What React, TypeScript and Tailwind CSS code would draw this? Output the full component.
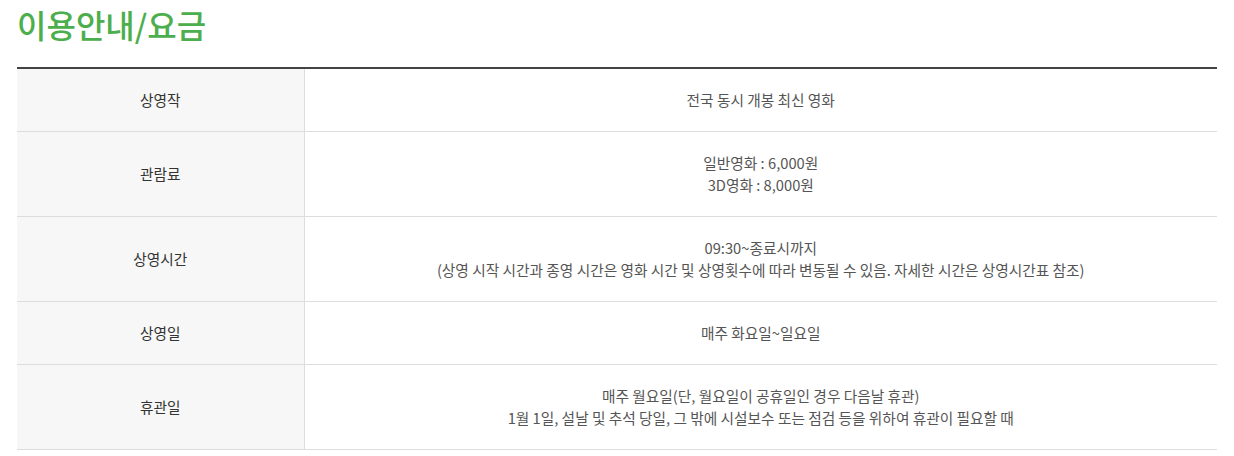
export default function App() {
  const rows: { label: string; lines: string[] }[] = [
    { label: "상영작", lines: ["전국 동시 개봉 최신 영화"] },
    { label: "관람료", lines: ["일반영화 : 6,000원", "3D영화 : 8,000원"] },
    {
      label: "상영시간",
      lines: [
        "09:30~종료시까지",
        "(상영 시작 시간과 종영 시간은 영화 시간 및 상영횟수에 따라 변동될 수 있음. 자세한 시간은 상영시간표 참조)",
      ],
    },
    { label: "상영일", lines: ["매주 화요일~일요일"] },
    {
      label: "휴관일",
      lines: [
        "매주 월요일(단, 월요일이 공휴일인 경우 다음날 휴관)",
        "1월 1일, 설날 및 추석 당일, 그 밖에 시설보수 또는 점검 등을 위하여 휴관이 필요할 때",
      ],
    },
  ];

  return (
    <div
      className="w-[1234px] bg-white pl-[17px] pr-[17px]"
      style={{ fontFamily: '"Noto Sans CJK KR", "Noto Sans", sans-serif' }}
    >
      {/* Title */}
      <h2 className="pt-[4px] text-[32px] font-medium leading-[40px] text-[#4cae4c]">
        이용안내/요금
      </h2>

      {/* Table */}
      <table className="mt-[23px] w-[1200px] border-collapse border-t-2 border-[#444]">
        <tbody>
          {rows.map((row) => (
            <tr key={row.label} className="border-b border-[#ddd]">
              <th className="w-[287px] border-r border-[#ddd] bg-[#f7f7f7] py-[20px] text-center text-[14.7px] font-normal leading-[22px] text-[#333]">
                {row.label}
              </th>
              <td className="py-[20px] text-center text-[14.7px] leading-[22px] text-[#555]">
                {row.lines.map((line) => (
                  <div key={line}>{line}</div>
                ))}
              </td>
            </tr>
          ))}
        </tbody>
      </table>
    </div>
  );
}
